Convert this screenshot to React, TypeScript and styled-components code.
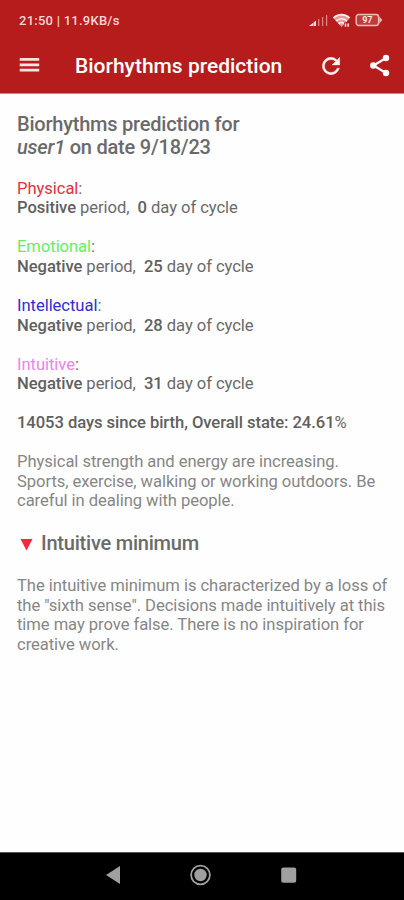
import React from 'react';
import styled, { createGlobalStyle } from 'styled-components';

const GlobalStyle = createGlobalStyle`
  * { box-sizing: border-box; }
  body { margin: 0; background: #fff; }
`;

const Screen = styled.div`
  width: 404px;
  height: 900px;
  display: flex;
  flex-direction: column;
  overflow: hidden;
  background: #fefefe;
  font-family: Roboto, 'Liberation Sans', sans-serif;
  color: #6a6a6a;
`;

const Header = styled.header`
  height: 94px;
  flex: none;
  background: #b71c1c;
  border-bottom: 1px solid #d08c8c;
  color: #fff;
`;

const StatusBar = styled.div`
  height: 40px;
  padding: 0 21px 0 19px;
  display: flex;
  align-items: center;
  justify-content: space-between;
`;

const Clock = styled.span`
  font-size: 13px;
  font-weight: 500;
  color: #f6d8d6;
  letter-spacing: 0.25px;
`;

const StatusIcons = styled.div`
  display: flex;
  align-items: center;
  gap: 3px;
`;

const Toolbar = styled.div`
  height: 51px;
  padding: 0 11px 0 17px;
  display: flex;
  align-items: center;
`;

const IconButton = styled.button<{ $gap?: number }>`
  display: flex;
  padding: 0;
  margin: 0 0 0 ${(p) => p.$gap ?? 0}px;
  border: 0;
  background: none;
  color: inherit;
`;

const Title = styled.h1`
  flex: 1;
  margin: 0 0 0 33px;
  font-size: 21px;
  line-height: 24px;
  font-weight: 500;
  white-space: nowrap;
`;

const Content = styled.main`
  flex: 1;
  padding: 18.5px 0 0 17px;
  font-size: 16.6px;
  line-height: 19.53px;
  letter-spacing: -0.06px;
  white-space: nowrap;
`;

const Heading = styled.h2`
  margin: 0;
  font-size: 20px;
  line-height: 23.4px;
  font-weight: 500;
  letter-spacing: -0.22px;
`;

const Section = styled.section`
  margin-top: 19.53px;
`;

const Line = styled.div``;

const Strong = styled.strong`
  font-weight: 500;
  color: #606060;
`;

const CycleName = styled.span<{ $color: string }>`
  color: ${(p) => p.$color};
`;

const Paragraph = styled.p`
  margin: 19.53px 0 0;
  color: #868686;
`;

const Warning = styled(Heading)`
  margin: 21.6px 0 20.4px;
  display: flex;
  align-items: center;
`;

const WarningIcon = styled.svg`
  margin: 0 8px 0 3px;
`;

const NavBar = styled.nav`
  height: 48px;
  flex: none;
  padding: 0 105px 3px 105px;
  display: flex;
  align-items: center;
  justify-content: space-between;
  background: #000;
  border-top: 1px solid #555;
`;

const cycles = [
  { name: 'Physical', color: '#e8303a', state: 'Positive', day: 0 },
  { name: 'Emotional', color: '#66ed66', state: 'Negative', day: 25 },
  { name: 'Intellectual', color: '#3030d0', state: 'Negative', day: 28 },
  { name: 'Intuitive', color: '#ee82ee', state: 'Negative', day: 31 },
];

const SignalIcon = () => (
  <svg width="20" height="13" viewBox="0 0 20 13">
    <path d="M0 12l4-3v3zM4.5 8.6l2.5-2V12H4.5z" fill="#fbe4e2" />
    <path d="M9.7 5V12M13.6 3V12M17.6 1V12" stroke="#db8582" strokeWidth="1.3" />
  </svg>
);

const WifiIcon = () => (
  <svg width="20" height="15" viewBox="0 0 20 15">
    <path d="M1.4 5.2a11.5 11.5 0 0 1 16.2 0L9.6 14z" fill="#e09a97" />
    <g fill="none" stroke="#fff0ee" strokeWidth="1.7">
      <path d="M1.4 5a11.5 11.5 0 0 1 16.2 0" />
      <path d="M4.1 8a7.6 7.6 0 0 1 10.8 0" />
      <path d="M6.7 10.8a4 4 0 0 1 5.6 0" />
    </g>
    <path d="M12 9.5h6v5.5h-6z" fill="#b71c1c" />
    <path d="M13.5 13.8v-3.3M16.2 10.5v3.3" stroke="#ffe8e6" strokeWidth="1.5" />
  </svg>
);

const BatteryText = styled.text`
  font: 700 9px Roboto, sans-serif;
  letter-spacing: 0;
`;

const BatteryIcon = () => (
  <svg width="28" height="14" viewBox="0 0 28 14">
    <rect x="1.2" y="1.5" width="22.4" height="11" rx="2.4" fill="#bf3c39" stroke="#f1bcb9" strokeWidth="1.4" />
    <path d="M24.3 3.5l3 3.5-3 3.5z" fill="#f1bcb9" />
    <BatteryText x="12.3" y="10.2" textAnchor="middle" fill="#ffe4e2">97</BatteryText>
  </svg>
);

const MenuIcon = () => (
  <svg width="25" height="24" viewBox="0 0 25 24">
    <path d="M2.7 5.4h19.5M2.7 10.8h19.5M2.7 16.2h19.5" stroke="#fbe3e1" strokeWidth="2.7" />
  </svg>
);

const RefreshIcon = () => (
  <svg width="26" height="26" viewBox="0 0 24 24">
    <path
      fill="#fff5f4"
      stroke="#fff5f4"
      strokeWidth="0.4"
      d="M17.65 6.35A7.958 7.958 0 0 0 12 4a8 8 0 1 0 7.73 10h-2.08A6 6 0 1 1 12 6c1.66 0 3.14.69 4.22 1.78L13 11h7V4z"
    />
  </svg>
);

const ShareIcon = () => (
  <svg width="26" height="26" viewBox="0 0 26 26">
    <path d="M19 5L6.5 12.5 19 20" fill="none" stroke="#fff" strokeWidth="2.2" />
    <g fill="#fff">
      <circle cx="19" cy="5" r="3.2" />
      <circle cx="6.3" cy="12.5" r="3.2" />
      <circle cx="19" cy="20" r="3.2" />
    </g>
  </svg>
);

export default function App() {
  return (
    <>
      <GlobalStyle />
      <Screen>
        <Header>
          <StatusBar>
            <Clock>21:50 | 11.9KB/s</Clock>
            <StatusIcons>
              <SignalIcon />
              <WifiIcon />
              <BatteryIcon />
            </StatusIcons>
          </StatusBar>
          <Toolbar>
            <IconButton aria-label="Menu"><MenuIcon /></IconButton>
            <Title>Biorhythms prediction</Title>
            <IconButton aria-label="Refresh"><RefreshIcon /></IconButton>
            <IconButton aria-label="Share" $gap={23}><ShareIcon /></IconButton>
          </Toolbar>
        </Header>
        <Content>
          <Heading>
            Biorhythms prediction for
            <br />
            <em>user1</em> on date 9/18/23
          </Heading>
          {cycles.map((c) => (
            <Section key={c.name}>
              <Line><CycleName $color={c.color}>{c.name}</CycleName>:</Line>
              <Line>
                <Strong>{c.state}</Strong> period,&nbsp; <Strong>{c.day}</Strong> day of cycle
              </Line>
            </Section>
          ))}
          <Section>
            <Strong>14053 days since birth, Overall state: 24.61</Strong>%
          </Section>
          <Paragraph>
            Physical strength and energy are increasing.
            <br />
            Sports, exercise, walking or working outdoors. Be
            <br />
            careful in dealing with people.
          </Paragraph>
          <Warning>
            <WarningIcon width="13" height="13" viewBox="0 0 13 13">
              <path d="M.5 1h12L6.5 12.5z" fill="#f5283c" />
            </WarningIcon>
            Intuitive minimum
          </Warning>
          <Paragraph>
            The intuitive minimum is characterized by a loss of
            <br />
            the "sixth sense". Decisions made intuitively at this
            <br />
            time may prove false. There is no inspiration for
            <br />
            creative work.
          </Paragraph>
        </Content>
        <NavBar>
          <svg width="16" height="20" viewBox="0 0 16 20">
            <path d="M1 10L15 1v18z" fill="#a0a0a0" />
          </svg>
          <svg width="22" height="22" viewBox="0 0 22 22">
            <circle cx="11.5" cy="11" r="9.4" fill="none" stroke="#a0a0a0" strokeWidth="1.8" />
            <circle cx="11.5" cy="11" r="6.2" fill="#a0a0a0" />
          </svg>
          <svg width="20" height="20" viewBox="0 0 20 20">
            <rect x="2.2" y="2.4" width="15" height="15.4" rx="2" fill="#a0a0a0" />
          </svg>
        </NavBar>
      </Screen>
    </>
  );
}
